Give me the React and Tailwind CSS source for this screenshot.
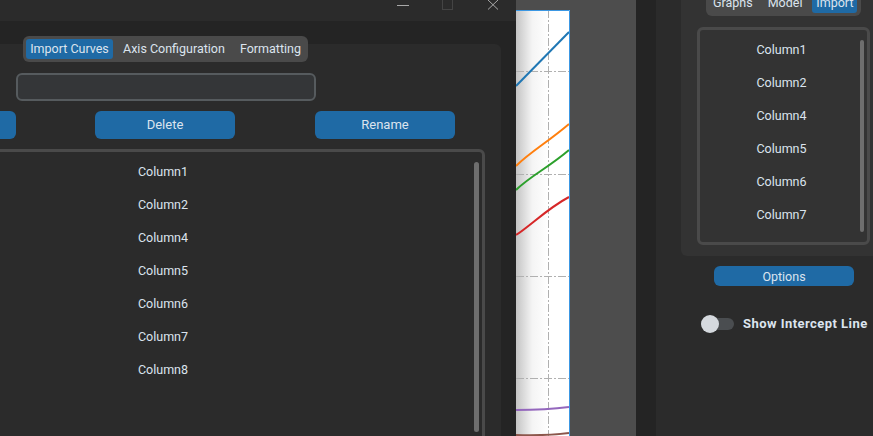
import React from "react";

const leftColumns = ["Column1", "Column2", "Column4", "Column5", "Column6", "Column7", "Column8"];
const rightColumns = ["Column1", "Column2", "Column4", "Column5", "Column6", "Column7"];

const Plot = () => (
  <svg width="54" height="426" viewBox="516 10 54 426" className="block">
    <defs>
      <linearGradient id="fade" x1="0" x2="1" y1="0" y2="0">
        <stop offset="0" stopColor="#c4c4c4" />
        <stop offset="0.3" stopColor="#f4f4f4" />
        <stop offset="0.6" stopColor="#ffffff" />
      </linearGradient>
    </defs>
    <rect x="516" y="10" width="54" height="426" fill="url(#fade)" />
    <g stroke="#b0b0b0" strokeWidth="1" strokeDasharray="8 2 2 2" fill="none">
      <path d="M516 71.5H569M516 174.5H569M516 276.5H569M516 378.5H569M548.5 10V436" />
    </g>
    <g fill="none" strokeWidth="2">
      <path d="M516 86L569 32" stroke="#1f77b4" />
      <path d="M516 166C530 152 548 142 569 124" stroke="#ff7f0e" />
      <path d="M516 190C530 176 548 168 569 150" stroke="#2ca02c" />
      <path d="M516 235C530 226 548 208 569 197" stroke="#d62728" />
      <path d="M516 410C535 410 550 409.5 569 407" stroke="#9467bd" />
      <path d="M516 435C535 435.5 550 435.5 569 433" stroke="#8c564b" />
    </g>
    <path d="M516 10.5H569.5V436" fill="none" stroke="#3b97e3" strokeWidth="1" />
  </svg>
);

export default function App() {
  return (
    <div className="flex h-[436px] w-[873px] overflow-hidden bg-[#242424] font-['Roboto',sans-serif] text-[12.5px] text-[#dce4ee]">
      {/* import dialog, runs off the left edge */}
      <div className="flex w-[516px] shrink-0 flex-col overflow-hidden">
        <div className="flex h-[21px] shrink-0 items-start bg-[#2b2b2b]">
          <svg width="516" height="21" className="block text-[#a8a8a8]">
            <path d="M397 5.5H409" stroke="currentColor" />
            <rect x="442.5" y="-1" width="10" height="10.5" fill="none" stroke="#444444" />
            <path d="M488 0L498 9.5M498 0L488 9.5" stroke="currentColor" />
          </svg>
        </div>
        <div className="flex-1 pt-[15px]">
          <div className="relative z-10 mb-[-18px] ml-[23px] flex h-[26px] w-[285px] items-center whitespace-nowrap rounded-md bg-[#4a4a4a] px-[3px]">
            <span className="flex h-5 w-[87px] items-center justify-center rounded-[3px] bg-[#1f6aa5]">Import Curves</span>
            <span className="ml-[10px]">Axis Configuration</span>
            <span className="ml-[15px]">Formatting</span>
          </div>
          <div className="h-[400px] w-[501px] overflow-hidden rounded-tr-md bg-[#2b2b2b] pt-[29px]">
            <div className="ml-4 h-[28px] w-[300px] rounded-md border-2 border-[#565b5e] bg-[#343638]" />
            <div className="ml-[-125px] mt-[10px] flex gap-[79px] text-[13px]">
              <div className="h-[28px] w-[141px] rounded-md bg-[#1f6aa5]" />
              <div className="flex h-[28px] w-[140px] items-center justify-center rounded-md bg-[#1f6aa5]">Delete</div>
              <div className="ml-[1px] flex h-[28px] w-[140px] items-center justify-center rounded-md bg-[#1f6aa5]">Rename</div>
            </div>
            <div className="relative ml-[-159px] mt-[10px] h-[320px] w-[644px] rounded-md border-[3px] border-[#4a4a4a] pt-[4px]">
              {leftColumns.map((name) => (
                <div key={name} className="flex h-[33px] items-center justify-center leading-none">
                  {name}
                </div>
              ))}
              <div className="absolute right-[3px] top-[10px] h-[270px] w-[5px] rounded-sm bg-[#6e6e6e]" />
            </div>
          </div>
        </div>
      </div>

      {/* plot area behind the dialog */}
      <div className="flex w-[120px] shrink-0 flex-col bg-[#4d4d4d] pt-[10px]">
        <Plot />
      </div>

      <div className="w-[20px] shrink-0 bg-[#242424]" />

      {/* right sidebar */}
      <div className="flex-1 bg-[#2b2b2b]">
        <div className="ml-[25px] h-[256px] rounded-bl-md bg-[#333333]">
          <div className="ml-[25px] flex h-[16px] w-[155px] items-start overflow-hidden rounded-b-md bg-[#4a4a4a] px-[3px]">
            <span className="ml-[4px] mt-[-4px] leading-[14px]">Graphs</span>
            <span className="ml-[15px] mt-[-4px] leading-[14px]">Model</span>
            <span className="ml-[10px] h-[13px] w-[45px] rounded-b-[3px] bg-[#1f6aa5] text-center">
              <span className="mt-[-4px] block leading-[14px]">Import</span>
            </span>
          </div>
          <div className="relative ml-[16px] mt-[11px] h-[218px] w-[173px] rounded-md border-[3px] border-[#4a4a4a] pt-[4px]">
            {rightColumns.map((name) => (
              <div key={name} className="flex h-[33px] items-center justify-center pr-[4px] leading-none">
                {name}
              </div>
            ))}
            <div className="absolute right-[3px] top-[10px] h-[192px] w-[4px] rounded-sm bg-[#6e6e6e]" />
          </div>
        </div>
        <div className="ml-[58px] mt-[10px] flex h-5 w-[140px] items-center justify-center rounded-md bg-[#1f6aa5] pt-[2px]">Options</div>
        <div className="ml-[45px] mt-[29px] flex h-[18px] items-center">
          <div className="relative h-[12px] w-[33px] rounded-full bg-[#4a4d50]">
            <div className="absolute left-0 top-[-3px] h-[18px] w-[18px] rounded-full bg-[#d5d9de]" />
          </div>
          <span className="ml-[9px] whitespace-nowrap text-[13px] font-bold tracking-[0.45px]">Show Intercept Line</span>
        </div>
      </div>
    </div>
  );
}
